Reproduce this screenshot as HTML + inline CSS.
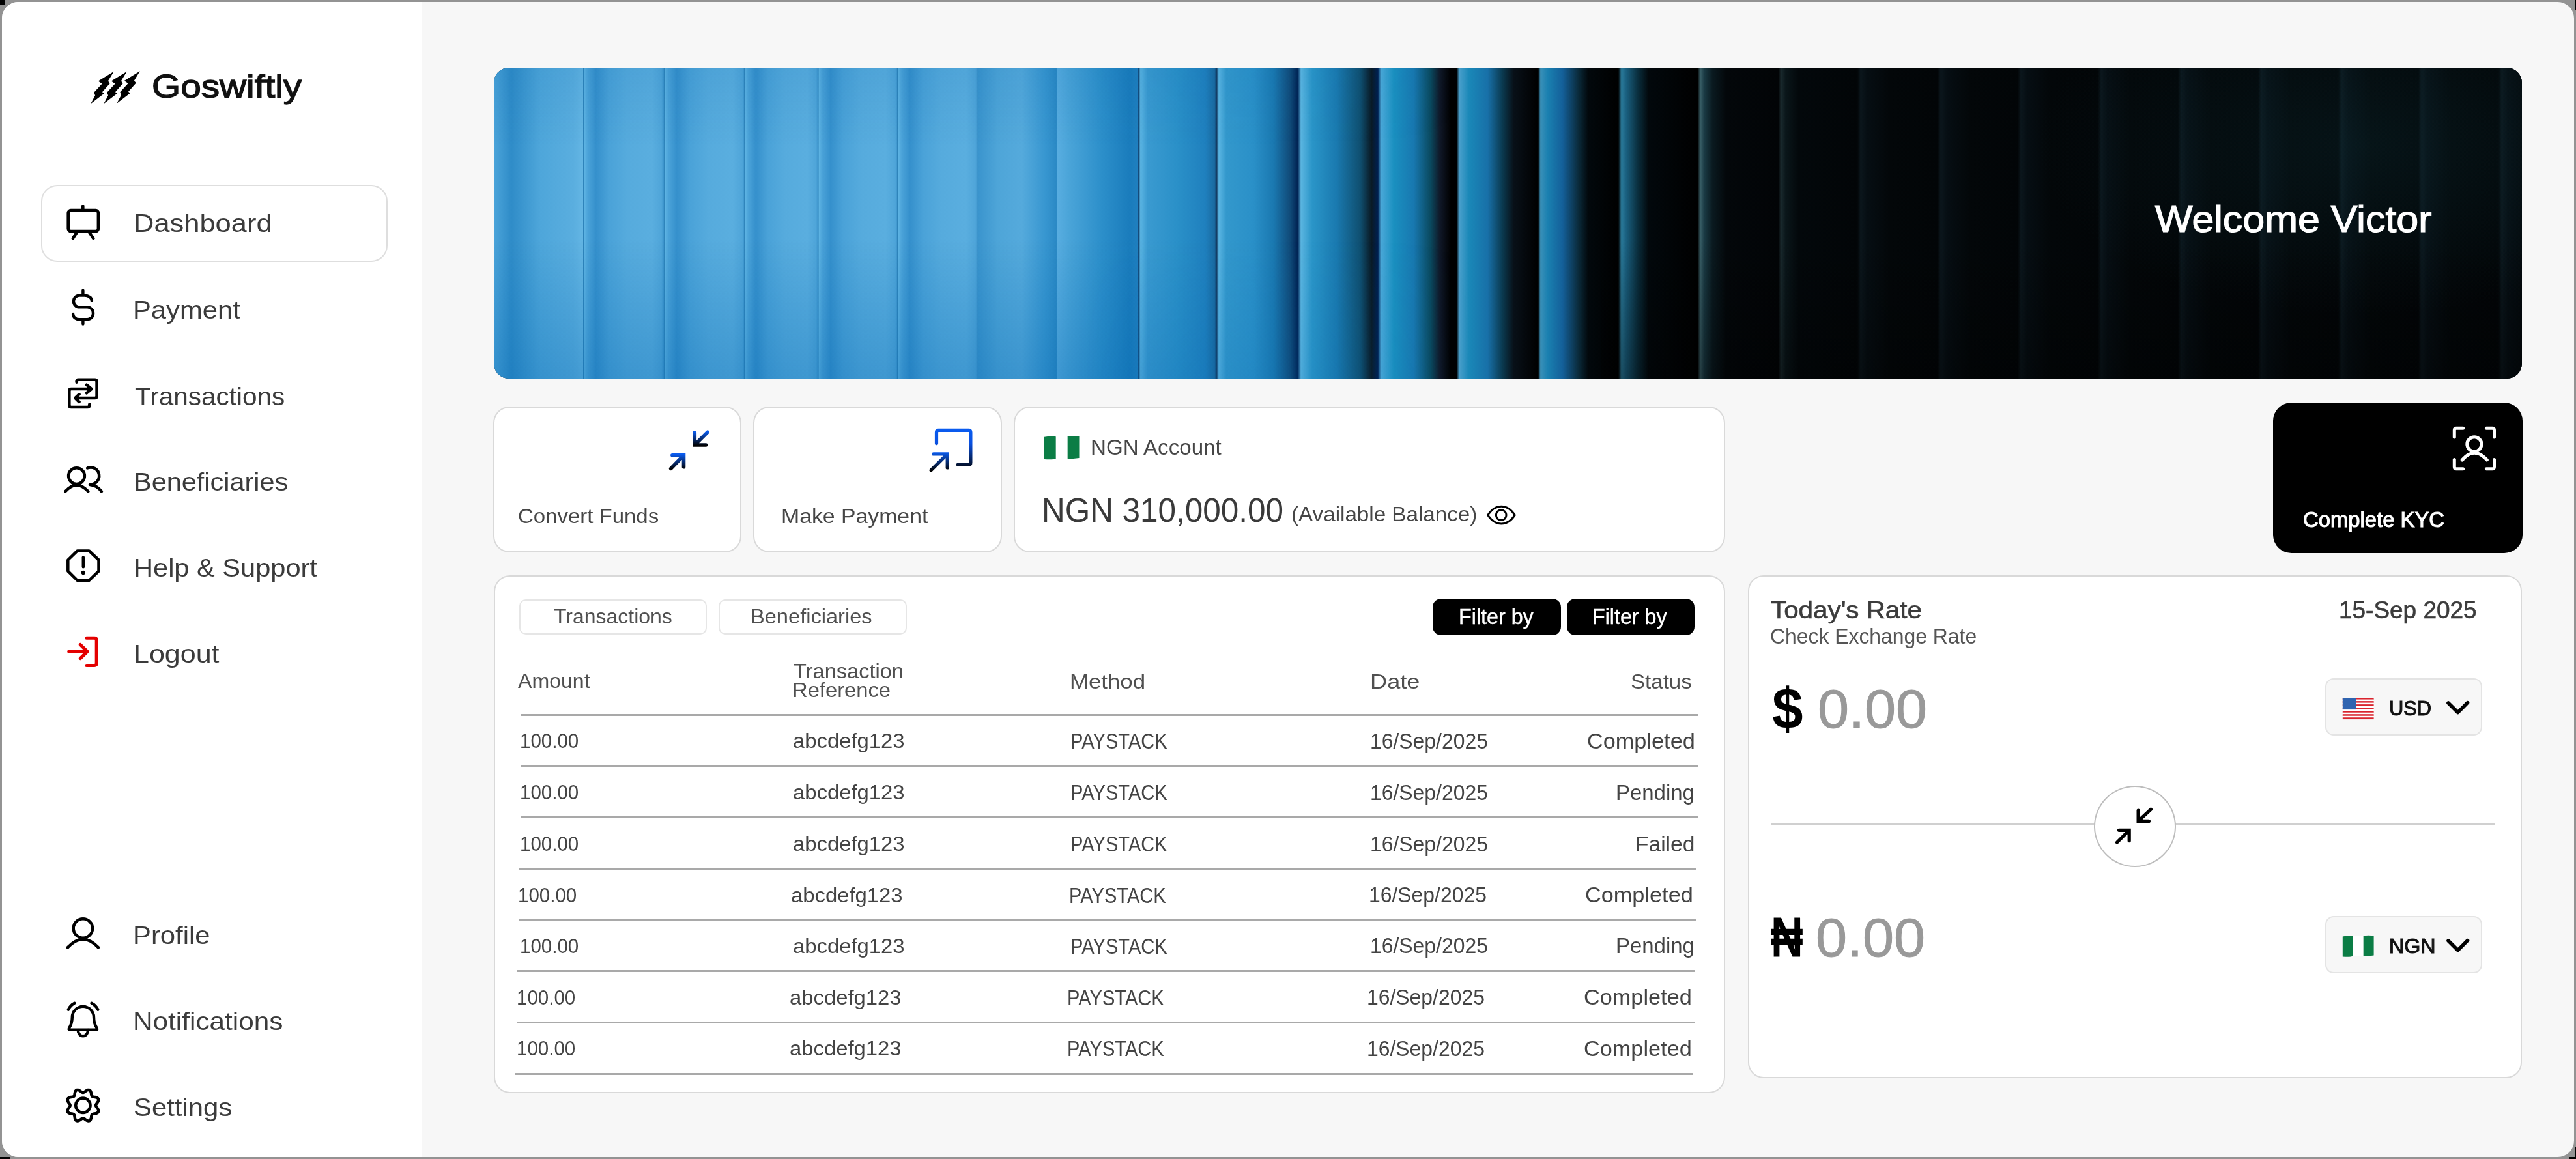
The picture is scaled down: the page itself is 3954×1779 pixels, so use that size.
<!DOCTYPE html><html><head><meta charset="utf-8"><title>Goswiftly Dashboard</title><style>
*{margin:0;padding:0;box-sizing:border-box}
html,body{width:3954px;height:1779px;overflow:hidden;background:#939393;font-family:"Liberation Sans",sans-serif}
.t{position:absolute;line-height:1;white-space:pre;transform-origin:0 0}
.abs{position:absolute}
.frame{position:absolute;left:3px;top:3px;width:3948px;height:1773px;border-radius:25px;overflow:hidden;background:#f7f7f7}
.card{position:absolute;background:#fff;border:2.5px solid #d9d9d9;border-radius:25px}
svg{position:absolute;overflow:visible}
</style></head><body>
<div class="abs" style="left:0;top:0;width:8px;height:8px;background:#000"></div>
<div class="abs" style="left:3952px;top:0;width:2px;height:16px;background:#000"></div>
<div class="abs" style="left:0;top:1776px;width:16px;height:3px;background:#000"></div>
<div class="abs" style="left:3944px;top:1776px;width:10px;height:3px;background:#000"></div>
<div class="abs" style="left:3952px;top:1760px;width:2px;height:19px;background:#000"></div>
<div class="frame"><div class="abs" style="left:-3px;top:-3px;width:3954px;height:1779px">
<div class="abs" style="left:0;top:0;width:648px;height:1779px;background:#fff"></div>
<div class="abs" style="left:63px;top:284px;width:532px;height:118px;border:2.5px solid #dedede;border-radius:25px;background:#fff"></div>
<div class="abs" style="left:758px;top:104px;width:3113px;height:477px;border-radius:23px;overflow:hidden;background:#02070b">
<div class="abs" style="left:-10.0px;top:0;width:147.1px;height:477px;background:linear-gradient(90deg,#5cb2e2 0%,#4aa3d9 8%,#2f8cc8 25%,#4ea6da 55%,#5aaedf 90%,#64b6e4 100%)"></div>
<div class="abs" style="left:136.6px;top:0;width:124.4px;height:477px;background:linear-gradient(90deg,#2378b0 0%,#5cb2e2 2%,#4aa2d8 6%,#3590cc 16%,#4aa2d8 32%,#56abdd 55%,#5aaedf 85%,#4fa5d9 97%,#3a92ca 100%)"></div>
<div class="abs" style="left:260.5px;top:0;width:124.3px;height:477px;background:linear-gradient(90deg,#2378b0 0%,#5cb2e2 2%,#4aa2d8 6%,#3590cc 16%,#4aa2d8 32%,#56abdd 55%,#5aaedf 85%,#4fa5d9 97%,#3a92ca 100%)"></div>
<div class="abs" style="left:384.3px;top:0;width:113.6px;height:477px;background:linear-gradient(90deg,#2378b0 0%,#5cb2e2 2%,#4aa2d8 6%,#3590cc 16%,#4aa2d8 32%,#56abdd 55%,#5aaedf 85%,#4fa5d9 97%,#3a92ca 100%)"></div>
<div class="abs" style="left:497.4px;top:0;width:122.2px;height:477px;background:linear-gradient(90deg,#2378b0 0%,#5cb2e2 2%,#4aa2d8 6%,#3590cc 16%,#4aa2d8 32%,#56abdd 55%,#5aaedf 85%,#4fa5d9 97%,#3a92ca 100%)"></div>
<div class="abs" style="left:619.1px;top:0;width:124.3px;height:477px;background:linear-gradient(90deg,#2378b0 0%,#5cb2e2 2%,#4aa2d8 6%,#3590cc 16%,#4aa2d8 32%,#56abdd 55%,#5aaedf 85%,#4fa5d9 97%,#3a92ca 100%)"></div>
<div class="abs" style="left:742.9px;top:0;width:122.3px;height:477px;background:linear-gradient(90deg,#3a94cd 0%,#4ea5d8 25%,#55aadc 55%,#3796d0 85%,#2a88c4 100%)"></div>
<div class="abs" style="left:864.7px;top:0;width:124.3px;height:477px;background:linear-gradient(90deg,#58ade0 0%,#4aa4d8 15%,#2c8fca 55%,#1a7cbc 90%,#2080c0 100%)"></div>
<div class="abs" style="left:988.5px;top:0;width:121.0px;height:477px;background:linear-gradient(90deg,#0a3a6a 0%,#5ab4e2 3%,#3a9ad0 12%,#2a90c8 50%,#1f80be 85%,#1a6aa0 97%,#0a2a50 100%)"></div>
<div class="abs" style="left:1109.0px;top:0;width:125.5px;height:477px;background:linear-gradient(90deg,#0a2a50 0%,#5ab5e2 3%,#3398cc 12%,#2a90c8 45%,#1a78b0 70%,#104a78 90%,#002050 100%)"></div>
<div class="abs" style="left:1234.0px;top:0;width:123.0px;height:477px;background:linear-gradient(90deg,#002050 0%,#5ab5e0 4%,#2a95c8 18%,#1a7ab0 48%,#0f4f70 78%,#0a1a25 92%,#002050 100%)"></div>
<div class="abs" style="left:1356.5px;top:0;width:122.0px;height:477px;background:linear-gradient(90deg,#002050 0%,#4aa8d8 4%,#1a90c0 20%,#1878b0 45%,#0a4a60 66%,#101828 78%,#000 92%,#000 100%)"></div>
<div class="abs" style="left:1478.0px;top:0;width:125.0px;height:477px;background:linear-gradient(90deg,#000 0%,#4aa0cc 3%,#1a88b8 15%,#1870a8 38%,#0a3a50 56%,#081018 70%,#000 100%)"></div>
<div class="abs" style="left:1602.5px;top:0;width:124.4px;height:477px;background:linear-gradient(90deg,#000 0%,#3a90b8 3%,#1a80b0 12%,#14609a 30%,#0a2a3a 50%,#02080c 62%,#000 100%)"></div>
<div class="abs" style="left:1726.4px;top:0;width:122.1px;height:477px;background:linear-gradient(90deg,#000 0%,#2a7a9a 4%,#1a6080 10%,#0a3040 24%,#02080c 38%,#000 100%)"></div>
<div class="abs" style="left:1848.0px;top:0;width:124.5px;height:477px;background:linear-gradient(90deg,#000 0%,#3a6068 3%,#1a3a44 8%,#0a1a20 18%,#03070a 35%,#020406 100%)"></div>
<div class="abs" style="left:1972.0px;top:0;width:121.5px;height:477px;background:linear-gradient(90deg,#020406 0%,#1a2a2e 3%,#0a161a 9%,#03080b 25%,#020507 100%)"></div>
<div class="abs" style="left:2093.0px;top:0;width:123.5px;height:477px;background:linear-gradient(90deg,#020507 0%,#0b161c 4%,#060e13 12%,#030709 40%,#020507 100%)"></div>
<div class="abs" style="left:2216.0px;top:0;width:123.5px;height:477px;background:linear-gradient(90deg,#020507 0%,#0b161c 4%,#060e13 12%,#030709 40%,#020507 100%)"></div>
<div class="abs" style="left:2339.0px;top:0;width:123.5px;height:477px;background:linear-gradient(90deg,#020507 0%,#0b161c 4%,#060e13 12%,#030709 40%,#020507 100%)"></div>
<div class="abs" style="left:2462.0px;top:0;width:123.5px;height:477px;background:linear-gradient(90deg,#020507 0%,#0b161c 4%,#060e13 12%,#030709 40%,#020507 100%)"></div>
<div class="abs" style="left:2585.0px;top:0;width:123.5px;height:477px;background:linear-gradient(90deg,#020507 0%,#0b161c 4%,#060e13 12%,#030709 40%,#020507 100%)"></div>
<div class="abs" style="left:2708.0px;top:0;width:123.5px;height:477px;background:linear-gradient(90deg,#020507 0%,#0b161c 4%,#060e13 12%,#030709 40%,#020507 100%)"></div>
<div class="abs" style="left:2831.0px;top:0;width:123.5px;height:477px;background:linear-gradient(90deg,#020507 0%,#0b161c 4%,#060e13 12%,#030709 40%,#020507 100%)"></div>
<div class="abs" style="left:2954.0px;top:0;width:123.5px;height:477px;background:linear-gradient(90deg,#020507 0%,#0b161c 4%,#060e13 12%,#030709 40%,#020507 100%)"></div>
<div class="abs" style="left:3077.0px;top:0;width:123.5px;height:477px;background:linear-gradient(90deg,#020507 0%,#0b161c 4%,#060e13 12%,#030709 40%,#020507 100%)"></div>
<div class="abs" style="left:0;top:0;width:1500px;height:100%;background:linear-gradient(180deg,rgba(0,90,160,0.10) 0%,rgba(0,90,160,0) 25%,rgba(0,100,170,0) 55%,rgba(0,100,175,0.30) 100%);-webkit-mask-image:linear-gradient(90deg,#000 60%,transparent 100%)"></div>
<div class="abs" style="left:2300px;top:0;width:813px;height:100%;background:radial-gradient(ellipse 500px 260px at 70% 25%,rgba(20,70,80,0.22),rgba(20,70,80,0) 100%)"></div>
<div class="abs" style="left:1700px;top:0;width:1413px;height:100%;background:linear-gradient(180deg,rgba(0,0,0,0) 55%,rgba(0,0,0,0.35) 100%)"></div>
</div>
<div class="card" style="left:757px;top:623.5px;width:381px;height:224px"></div>
<div class="card" style="left:1156px;top:623.5px;width:381.5px;height:224px"></div>
<div class="card" style="left:1556px;top:624px;width:1092px;height:223.5px"></div>
<div class="abs" style="left:3488.5px;top:618px;width:383px;height:230.5px;background:#000;border-radius:28px"></div>
<div class="card" style="left:757.5px;top:882.5px;width:1890.5px;height:795px;border-radius:25px"></div>
<div class="card" style="left:2682.5px;top:882.5px;width:1188.5px;height:772.5px;border-radius:24px"></div>
<div class="abs" style="left:797px;top:919.5px;width:288px;height:54.5px;border:2px solid #e6e6e6;border-radius:10px;background:#fff"></div>
<div class="abs" style="left:1103px;top:919.5px;width:288.5px;height:54.5px;border:2px solid #e6e6e6;border-radius:10px;background:#fff"></div>
<div class="abs" style="left:2198.5px;top:918.5px;width:197px;height:56.5px;background:#000;border-radius:13px"></div>
<div class="abs" style="left:2404.5px;top:918.5px;width:196.5px;height:56.5px;background:#000;border-radius:13px"></div>
<div class="abs" style="left:799px;top:1096.0px;width:1807.0px;height:2.5px;background:#a9a9a9"></div>
<div class="abs" style="left:799.6px;top:1174.3px;width:1806.6px;height:2.5px;background:#a9a9a9"></div>
<div class="abs" style="left:799.6px;top:1253.3px;width:1806.6px;height:2.5px;background:#a9a9a9"></div>
<div class="abs" style="left:796.5px;top:1332.3px;width:1807.2px;height:2.5px;background:#a9a9a9"></div>
<div class="abs" style="left:796.5px;top:1410.3px;width:1806.8px;height:2.5px;background:#a9a9a9"></div>
<div class="abs" style="left:794px;top:1489.3px;width:1806.8px;height:2.5px;background:#a9a9a9"></div>
<div class="abs" style="left:794px;top:1568.3px;width:1806.8px;height:2.5px;background:#a9a9a9"></div>
<div class="abs" style="left:791.3px;top:1647.3px;width:1806.7px;height:2.5px;background:#a9a9a9"></div>
<div class="abs" style="left:2718.5px;top:1263px;width:1110.5px;height:3.5px;background:#d0d0d0"></div>
<div class="abs" style="left:3214px;top:1206px;width:126px;height:124.5px;border:2.5px solid #bdbdbd;border-radius:50%;background:#fff"></div>
<div class="abs" style="left:3568.5px;top:1041px;width:241px;height:88px;border:2px solid #e4e4e4;border-radius:13px;background:#f7f7f7"></div>
<div class="abs" style="left:3568.5px;top:1406px;width:241px;height:88px;border:2px solid #e4e4e4;border-radius:13px;background:#f7f7f7"></div>
<div class="t" style="left:233.2px;top:107.9px;font-size:50.72px;color:#111;font-weight:normal;transform:scaleX(1.1188);-webkit-text-stroke:1.3px #111;">Goswiftly</div>
<div class="t" style="left:204.5px;top:323.1px;font-size:39.42px;color:#3b3b3b;font-weight:normal;transform:scaleX(1.1028);">Dashboard</div>
<div class="t" style="left:204.2px;top:456.0px;font-size:39.42px;color:#3b3b3b;font-weight:normal;transform:scaleX(1.0601);">Payment</div>
<div class="t" style="left:206.7px;top:588.5px;font-size:39.42px;color:#3b3b3b;font-weight:normal;transform:scaleX(1.0278);">Transactions</div>
<div class="t" style="left:204.9px;top:719.9px;font-size:39.42px;color:#3b3b3b;font-weight:normal;transform:scaleX(1.0513);">Beneficiaries</div>
<div class="t" style="left:204.9px;top:851.8px;font-size:39.42px;color:#3b3b3b;font-weight:normal;transform:scaleX(1.0548);">Help &amp; Support</div>
<div class="t" style="left:204.8px;top:983.8px;font-size:39.42px;color:#3b3b3b;font-weight:normal;transform:scaleX(1.0916);">Logout</div>
<div class="t" style="left:204.0px;top:1417.3px;font-size:38.41px;color:#3b3b3b;font-weight:normal;transform:scaleX(1.0895);">Profile</div>
<div class="t" style="left:203.6px;top:1549.3px;font-size:38.41px;color:#3b3b3b;font-weight:normal;transform:scaleX(1.1016);">Notifications</div>
<div class="t" style="left:204.9px;top:1681.3px;font-size:38.41px;color:#3b3b3b;font-weight:normal;transform:scaleX(1.0902);">Settings</div>
<div class="t" style="left:3308.4px;top:308.7px;font-size:56.52px;color:#fff;font-weight:normal;transform:scaleX(1.0784);-webkit-text-stroke:1.2px #fff;">Welcome Victor</div>
<div class="t" style="left:795.1px;top:777.1px;font-size:30.43px;color:#464646;font-weight:normal;transform:scaleX(1.0832);">Convert Funds</div>
<div class="t" style="left:1198.9px;top:777.1px;font-size:30.43px;color:#464646;font-weight:normal;transform:scaleX(1.1106);">Make Payment</div>
<div class="t" style="left:1674.3px;top:669.5px;font-size:33.33px;color:#464646;font-weight:normal;transform:scaleX(0.9940);">NGN Account</div>
<div class="t" style="left:1599.0px;top:756.6px;font-size:52.17px;color:#3a3a3a;font-weight:normal;transform:scaleX(0.9479);">NGN 310,000.00</div>
<div class="t" style="left:1981.5px;top:773.9px;font-size:31.88px;color:#464646;font-weight:normal;transform:scaleX(1.0411);">(Available Balance)</div>
<div class="t" style="left:3535.1px;top:782.1px;font-size:32.61px;color:#fff;font-weight:normal;transform:scaleX(1.0061);-webkit-text-stroke:1.0px #fff;">Complete KYC</div>
<div class="t" style="left:850.0px;top:931.4px;font-size:31.30px;color:#505050;font-weight:normal;transform:scaleX(1.0213);">Transactions</div>
<div class="t" style="left:1152.0px;top:931.4px;font-size:31.30px;color:#505050;font-weight:normal;transform:scaleX(1.0415);">Beneficiaries</div>
<div class="t" style="left:2239.4px;top:930.5px;font-size:32.90px;color:#fff;font-weight:normal;transform:scaleX(0.9811);-webkit-text-stroke:0.4px #fff;">Filter by</div>
<div class="t" style="left:2444.4px;top:930.5px;font-size:32.90px;color:#fff;font-weight:normal;transform:scaleX(0.9793);-webkit-text-stroke:0.4px #fff;">Filter by</div>
<div class="t" style="left:794.6px;top:1030.0px;font-size:31.16px;color:#505050;font-weight:normal;transform:scaleX(1.0300);">Amount</div>
<div class="t" style="left:1217.9px;top:1015.2px;font-size:31.16px;color:#505050;font-weight:normal;transform:scaleX(1.0452);">Transaction</div>
<div class="t" style="left:1216.0px;top:1043.5px;font-size:31.16px;color:#505050;font-weight:normal;transform:scaleX(1.0507);">Reference</div>
<div class="t" style="left:1642.2px;top:1030.7px;font-size:31.16px;color:#505050;font-weight:normal;transform:scaleX(1.1167);">Method</div>
<div class="t" style="left:2103.1px;top:1030.7px;font-size:31.16px;color:#505050;font-weight:normal;transform:scaleX(1.1612);">Date</div>
<div class="t" style="left:2503.3px;top:1030.7px;font-size:31.16px;color:#505050;font-weight:normal;transform:scaleX(1.0620);">Status</div>
<div class="t" style="left:2717.9px;top:918.4px;font-size:37.68px;color:#3c3c3c;font-weight:normal;transform:scaleX(1.0709);-webkit-text-stroke:0.6px #3c3c3c;">Today's Rate</div>
<div class="t" style="left:2717.1px;top:961.1px;font-size:32.75px;color:#555;font-weight:normal;transform:scaleX(0.9732);">Check Exchange Rate</div>
<div class="t" style="left:3589.9px;top:918.4px;font-size:37.68px;color:#3c3c3c;font-weight:normal;transform:scaleX(0.9810);-webkit-text-stroke:0.6px #3c3c3c;">15-Sep 2025</div>
<div class="t" style="left:2719.9px;top:1043.1px;font-size:89.02px;color:#000;font-weight:bold;transform:scaleX(0.9591);">$</div>
<div class="t" style="left:2789.7px;top:1046.0px;font-size:84.23px;color:#999;font-weight:normal;transform:scaleX(1.0254);-webkit-text-stroke:1.0px #999;">0.00</div>
<div class="t" style="left:3666.7px;top:1071.4px;font-size:32.17px;color:#111;font-weight:normal;transform:scaleX(0.9591);-webkit-text-stroke:1.1px #111;">USD</div>
<div class="t" style="left:2717.9px;top:1395.5px;font-size:86.57px;color:#000;font-weight:bold;transform:scaleX(0.7954);">₦</div>
<div class="t" style="left:2787.3px;top:1397.7px;font-size:83.52px;color:#999;font-weight:normal;transform:scaleX(1.0340);-webkit-text-stroke:1.0px #999;">0.00</div>
<div class="t" style="left:3667.4px;top:1437.3px;font-size:31.01px;color:#111;font-weight:normal;transform:scaleX(1.0377);-webkit-text-stroke:1.1px #111;">NGN</div>
<div class="t" style="left:797.8px;top:1122.4px;font-size:31.88px;color:#444;font-weight:normal;transform:scaleX(0.9260);">100.00</div>
<div class="t" style="left:1216.9px;top:1122.4px;font-size:31.88px;color:#444;font-weight:normal;transform:scaleX(1.0300);">abcdefg123</div>
<div class="t" style="left:1643.0px;top:1121.2px;font-size:33.33px;color:#444;font-weight:normal;transform:scaleX(0.8731);">PAYSTACK</div>
<div class="t" style="left:2103.4px;top:1121.8px;font-size:32.61px;color:#444;font-weight:normal;transform:scaleX(0.9780);">16/Sep/2025</div>
<div class="t" style="left:2435.7px;top:1121.8px;font-size:32.61px;color:#444;font-weight:normal;transform:scaleX(1.0512);">Completed</div>
<div class="t" style="left:797.8px;top:1201.4px;font-size:31.88px;color:#444;font-weight:normal;transform:scaleX(0.9260);">100.00</div>
<div class="t" style="left:1216.9px;top:1201.4px;font-size:31.88px;color:#444;font-weight:normal;transform:scaleX(1.0300);">abcdefg123</div>
<div class="t" style="left:1643.0px;top:1200.2px;font-size:33.33px;color:#444;font-weight:normal;transform:scaleX(0.8731);">PAYSTACK</div>
<div class="t" style="left:2103.4px;top:1200.8px;font-size:32.61px;color:#444;font-weight:normal;transform:scaleX(0.9780);">16/Sep/2025</div>
<div class="t" style="left:2480.3px;top:1200.8px;font-size:32.61px;color:#444;font-weight:normal;transform:scaleX(1.0103);">Pending</div>
<div class="t" style="left:797.8px;top:1280.4px;font-size:31.88px;color:#444;font-weight:normal;transform:scaleX(0.9260);">100.00</div>
<div class="t" style="left:1216.9px;top:1280.4px;font-size:31.88px;color:#444;font-weight:normal;transform:scaleX(1.0300);">abcdefg123</div>
<div class="t" style="left:1643.0px;top:1279.2px;font-size:33.33px;color:#444;font-weight:normal;transform:scaleX(0.8731);">PAYSTACK</div>
<div class="t" style="left:2103.4px;top:1279.8px;font-size:32.61px;color:#444;font-weight:normal;transform:scaleX(0.9780);">16/Sep/2025</div>
<div class="t" style="left:2510.0px;top:1279.8px;font-size:32.61px;color:#444;font-weight:normal;transform:scaleX(1.0282);">Failed</div>
<div class="t" style="left:795.3px;top:1358.9px;font-size:31.88px;color:#444;font-weight:normal;transform:scaleX(0.9260);">100.00</div>
<div class="t" style="left:1214.4px;top:1358.9px;font-size:31.88px;color:#444;font-weight:normal;transform:scaleX(1.0300);">abcdefg123</div>
<div class="t" style="left:1640.5px;top:1357.7px;font-size:33.33px;color:#444;font-weight:normal;transform:scaleX(0.8731);">PAYSTACK</div>
<div class="t" style="left:2100.9px;top:1358.3px;font-size:32.61px;color:#444;font-weight:normal;transform:scaleX(0.9780);">16/Sep/2025</div>
<div class="t" style="left:2433.2px;top:1358.3px;font-size:32.61px;color:#444;font-weight:normal;transform:scaleX(1.0512);">Completed</div>
<div class="t" style="left:797.8px;top:1436.9px;font-size:31.88px;color:#444;font-weight:normal;transform:scaleX(0.9260);">100.00</div>
<div class="t" style="left:1216.9px;top:1436.9px;font-size:31.88px;color:#444;font-weight:normal;transform:scaleX(1.0300);">abcdefg123</div>
<div class="t" style="left:1643.0px;top:1435.7px;font-size:33.33px;color:#444;font-weight:normal;transform:scaleX(0.8731);">PAYSTACK</div>
<div class="t" style="left:2103.4px;top:1436.3px;font-size:32.61px;color:#444;font-weight:normal;transform:scaleX(0.9780);">16/Sep/2025</div>
<div class="t" style="left:2480.3px;top:1436.3px;font-size:32.61px;color:#444;font-weight:normal;transform:scaleX(1.0103);">Pending</div>
<div class="t" style="left:792.8px;top:1515.9px;font-size:31.88px;color:#444;font-weight:normal;transform:scaleX(0.9260);">100.00</div>
<div class="t" style="left:1211.9px;top:1515.9px;font-size:31.88px;color:#444;font-weight:normal;transform:scaleX(1.0300);">abcdefg123</div>
<div class="t" style="left:1638.0px;top:1514.7px;font-size:33.33px;color:#444;font-weight:normal;transform:scaleX(0.8731);">PAYSTACK</div>
<div class="t" style="left:2098.4px;top:1515.3px;font-size:32.61px;color:#444;font-weight:normal;transform:scaleX(0.9780);">16/Sep/2025</div>
<div class="t" style="left:2430.7px;top:1515.3px;font-size:32.61px;color:#444;font-weight:normal;transform:scaleX(1.0512);">Completed</div>
<div class="t" style="left:792.8px;top:1594.4px;font-size:31.88px;color:#444;font-weight:normal;transform:scaleX(0.9260);">100.00</div>
<div class="t" style="left:1211.9px;top:1594.4px;font-size:31.88px;color:#444;font-weight:normal;transform:scaleX(1.0300);">abcdefg123</div>
<div class="t" style="left:1638.0px;top:1593.2px;font-size:33.33px;color:#444;font-weight:normal;transform:scaleX(0.8731);">PAYSTACK</div>
<div class="t" style="left:2098.4px;top:1593.8px;font-size:32.61px;color:#444;font-weight:normal;transform:scaleX(0.9780);">16/Sep/2025</div>
<div class="t" style="left:2430.7px;top:1593.8px;font-size:32.61px;color:#444;font-weight:normal;transform:scaleX(1.0512);">Completed</div>
<svg style="left:0;top:0" width="3954" height="1779" viewBox="0 0 3954 1779">
<defs>
<linearGradient id="gA" gradientUnits="userSpaceOnUse" x1="0" y1="12" x2="0" y2="34"><stop offset="0" stop-color="#0a5cf0"/><stop offset="1" stop-color="#000"/></linearGradient>
<linearGradient id="gB" gradientUnits="userSpaceOnUse" x1="0" y1="47" x2="0" y2="70"><stop offset="0" stop-color="#0a5cf0"/><stop offset="1" stop-color="#000"/></linearGradient>
<linearGradient id="gC" gradientUnits="userSpaceOnUse" x1="0" y1="10" x2="0" y2="75"><stop offset="0" stop-color="#0a5cf0"/><stop offset="0.35" stop-color="#0a50e0"/><stop offset="1" stop-color="#000"/></linearGradient>
<linearGradient id="gD" gradientUnits="userSpaceOnUse" x1="0" y1="46" x2="0" y2="75"><stop offset="0" stop-color="#0a5cf0"/><stop offset="1" stop-color="#000"/></linearGradient>
</defs>
<g transform="translate(130,100)"><g fill="#000"><polygon points="44.8,9.8 35.8,24.6 38.9,27.8 27,41.3 29.8,43.6 9.3,59.3 16,46.5 14.4,41.8 26.6,28.6 20.8,24.6"/><g transform="translate(20,0)"><polygon points="44.8,9.8 35.8,24.6 38.9,27.8 27,41.3 29.8,43.6 9.3,59.3 16,46.5 14.4,41.8 26.6,28.6 20.8,24.6"/></g><g transform="translate(40,-0.5)"><polygon points="44.8,9.8 35.8,24.6 38.9,27.8 27,41.3 29.8,43.6 9.3,59.3 16,46.5 14.4,41.8 26.6,28.6 20.8,24.6"/></g></g></g>
<g transform="translate(95,305)"><g fill="none" stroke="#000" stroke-linecap="round" stroke-linejoin="round" stroke-width="4.6"><rect x="9.7" y="18.1" width="46.2" height="32" rx="4"/><path d="M32.3,11.2V18M23.2,51.3L16.9,61M41.7,51.3L48.3,61"/></g></g>
<g transform="translate(92,436)"><path fill="none" stroke="#000" stroke-linecap="round" stroke-linejoin="round" stroke-width="4.4" d="M48.9,25.9C48.9,21 44,17.6 38,17.6H30C25,17.6 21,21.5 21,26.5C21,31.5 25,35.4 30,35.4H42C47,35.4 51.1,39.5 51.1,44.8C51.1,50 47,54.3 42,54.3H30C24,54.3 20.1,50.5 20.1,46M35.4,9.6V17.6M35.4,54.3V61.6"/></g>
<g transform="translate(95,570)"><path fill="none" stroke="#000" stroke-linecap="round" stroke-linejoin="round" stroke-width="4.6" d="M22.6,16.6V15.8Q22.6,12.8 25.6,12.8H50.6Q53.6,12.8 53.6,15.8V38Q53.6,41 50.6,41H20.5M26.6,35.2L20.5,41L26.6,47M42.3,50.7V52Q42.3,55 39.3,55H14.3Q11.3,55 11.3,52V30Q11.3,27 14.3,27H45.5M38,20.8L45.5,27L38,33.2"/></g>
<g transform="translate(92,700)"><g fill="none" stroke="#000" stroke-linecap="round" stroke-linejoin="round" stroke-width="4.5"><circle cx="25.5" cy="30.6" r="12.4"/><path d="M8.3,54.3Q25.5,35.1 43.4,54.3M42.1,18.5A13,13 0 1 1 46,43.4M46,44Q57,45 63.9,54.3"/></g></g>
<g transform="translate(92,832)"><g fill="none" stroke="#000" stroke-linecap="round" stroke-linejoin="round" stroke-width="4.5"><polygon points="26.8,13.4 44.7,13.4 59.5,27.5 59.5,44.7 44.7,59 26.8,59 12.3,44.7 12.3,27.5"/><path d="M35.8,23.6V38.3"/></g><circle cx="35.8" cy="46.9" r="3.1" fill="#000"/></g>
<g transform="translate(92,964)"><path fill="none" stroke="#e40000" stroke-width="5" stroke-linecap="round" stroke-linejoin="round" d="M40.9,15.3H53Q56.2,15.3 56.2,18.5V54.3Q56.2,57.5 53,57.5H40.9M13.7,36.1H41M31.3,25.5L42.1,36.1L31.3,46.6"/></g>
<g transform="translate(92,1396)"><g fill="none" stroke="#000" stroke-linecap="round" stroke-linejoin="round" stroke-width="4.5"><circle cx="35.4" cy="29" r="14.7"/><path d="M11.8,58.4Q35.4,33 59,58.4"/></g></g>
<g transform="translate(92,1528)"><g fill="none" stroke="#000" stroke-linecap="round" stroke-linejoin="round" stroke-width="4.4"><path d="M35.4,52.7H15.5Q13,52.7 14,50.3Q18.8,43 18.8,33.5A16.6,16.6 0 0 1 52,33.5Q52,43 56.8,50.3Q57.8,52.7 55.3,52.7Z"/><path d="M27.7,52.9A7.7,9.4 0 0 0 43.1,52.9M12.8,21.7Q16,15 22.3,11.8M48.5,11.8Q55,15 58.4,21.7"/></g></g>
<g transform="translate(92,1660)"><g fill="none" stroke="#000" stroke-linecap="round" stroke-linejoin="round" stroke-width="4.5"><polygon points="35.40,17.00 35.92,16.94 36.44,16.78 36.99,16.51 37.56,16.15 38.16,15.73 38.80,15.26 39.46,14.78 40.16,14.30 40.89,13.85 41.62,13.47 42.37,13.17 43.11,12.97 43.83,12.90 44.52,12.95 45.16,13.14 45.75,13.46 46.27,13.91 46.73,14.47 47.11,15.13 47.42,15.87 47.68,16.67 47.87,17.49 48.03,18.32 48.16,19.14 48.28,19.92 48.40,20.64 48.55,21.30 48.75,21.87 49.00,22.36 49.33,22.77 49.74,23.10 50.23,23.35 50.80,23.55 51.46,23.70 52.18,23.82 52.96,23.94 53.78,24.07 54.61,24.23 55.43,24.42 56.23,24.67 56.97,24.99 57.63,25.37 58.19,25.83 58.64,26.35 58.96,26.94 59.15,27.58 59.20,28.27 59.13,28.99 58.93,29.73 58.63,30.48 58.25,31.21 57.80,31.94 57.32,32.64 56.84,33.30 56.37,33.94 55.95,34.54 55.59,35.11 55.32,35.66 55.16,36.18 55.10,36.70 55.16,37.22 55.32,37.74 55.59,38.29 55.95,38.86 56.37,39.46 56.84,40.10 57.32,40.76 57.80,41.46 58.25,42.19 58.63,42.92 58.93,43.67 59.13,44.41 59.20,45.13 59.15,45.82 58.96,46.46 58.64,47.05 58.19,47.57 57.63,48.03 56.97,48.41 56.23,48.73 55.43,48.98 54.61,49.17 53.78,49.33 52.96,49.46 52.18,49.58 51.46,49.70 50.80,49.85 50.23,50.05 49.74,50.30 49.33,50.63 49.00,51.04 48.75,51.53 48.55,52.10 48.40,52.76 48.28,53.48 48.16,54.26 48.03,55.08 47.87,55.91 47.68,56.73 47.42,57.53 47.11,58.27 46.73,58.93 46.27,59.49 45.75,59.94 45.16,60.26 44.52,60.45 43.83,60.50 43.11,60.43 42.37,60.23 41.62,59.93 40.89,59.55 40.16,59.10 39.46,58.62 38.80,58.14 38.16,57.67 37.56,57.25 36.99,56.89 36.44,56.62 35.92,56.46 35.40,56.40 34.88,56.46 34.36,56.62 33.81,56.89 33.24,57.25 32.64,57.67 32.00,58.14 31.34,58.62 30.64,59.10 29.91,59.55 29.18,59.93 28.43,60.23 27.69,60.43 26.97,60.50 26.28,60.45 25.64,60.26 25.05,59.94 24.53,59.49 24.07,58.93 23.69,58.27 23.38,57.53 23.12,56.73 22.93,55.91 22.77,55.08 22.64,54.26 22.52,53.48 22.40,52.76 22.25,52.10 22.05,51.53 21.80,51.04 21.47,50.63 21.06,50.30 20.57,50.05 20.00,49.85 19.34,49.70 18.62,49.58 17.84,49.46 17.02,49.33 16.19,49.17 15.37,48.98 14.57,48.73 13.83,48.41 13.17,48.03 12.61,47.57 12.16,47.05 11.84,46.46 11.65,45.82 11.60,45.13 11.67,44.41 11.87,43.67 12.17,42.92 12.55,42.19 13.00,41.46 13.48,40.76 13.96,40.10 14.43,39.46 14.85,38.86 15.21,38.29 15.48,37.74 15.64,37.22 15.70,36.70 15.64,36.18 15.48,35.66 15.21,35.11 14.85,34.54 14.43,33.94 13.96,33.30 13.48,32.64 13.00,31.94 12.55,31.21 12.17,30.48 11.87,29.73 11.67,28.99 11.60,28.27 11.65,27.58 11.84,26.94 12.16,26.35 12.61,25.83 13.17,25.37 13.83,24.99 14.57,24.68 15.37,24.42 16.19,24.23 17.02,24.07 17.84,23.94 18.62,23.82 19.34,23.70 20.00,23.55 20.57,23.35 21.06,23.10 21.47,22.77 21.80,22.36 22.05,21.87 22.25,21.30 22.40,20.64 22.52,19.92 22.64,19.14 22.77,18.32 22.93,17.49 23.12,16.67 23.38,15.87 23.69,15.13 24.07,14.47 24.53,13.91 25.05,13.46 25.64,13.14 26.28,12.95 26.97,12.90 27.69,12.97 28.43,13.17 29.18,13.47 29.91,13.85 30.64,14.30 31.34,14.78 32.00,15.26 32.64,15.73 33.24,16.15 33.81,16.51 34.36,16.78 34.88,16.94"/><circle cx="35.4" cy="36.7" r="11.2"/></g></g>
<g transform="translate(1015,650)"><g fill="none" stroke-width="5.6" stroke-linecap="round" stroke-linejoin="miter"><path stroke="url(#gA)" d="M71.1,13.2L52,32.3M51.3,13.9V33H68.6"/><path stroke="url(#gB)" d="M14.7,69.3L33.8,49.5M16.9,48.8H34.5V66.7"/></g></g>
<g transform="translate(1415,648)"><g fill="none" stroke="url(#gC)" stroke-width="5.2" stroke-linecap="round" stroke-linejoin="round"><path d="M22.5,32.6V15.4Q22.5,12.4 25.5,12.4H71.9Q74.9,12.4 74.9,15.4V62.2Q74.9,65.2 71.9,65.2H55.5"/></g><g fill="none" stroke="url(#gD)" stroke-width="5.2" stroke-linecap="round" stroke-linejoin="miter"><path d="M14,73.8L38.5,49.6M17.9,48.9H39.2V69.9"/></g></g>
<g transform="translate(2270,760)"><g fill="none" stroke="#000" stroke-linecap="round" stroke-linejoin="round" stroke-width="3"><path d="M13.7,30.6C20,21 27,17.2 34.45,17.2C42,17.2 49,21 55.2,30.6C49,40.2 42,44 34.45,44C27,44 20,40.2 13.7,30.6Z"/><circle cx="34.2" cy="30.6" r="7.9"/></g></g>
<g transform="translate(3750,640)"><g fill="none" stroke="#fff" stroke-width="5" stroke-linecap="round" stroke-linejoin="round"><path d="M17.3,31V20.3Q17.3,17.3 20.3,17.3H30.6M66.4,17.3H75.5Q78.5,17.3 78.5,20.3V31M17.3,65.6V76.8Q17.3,79.8 20.3,79.8H30.6M66.4,79.8H75.5Q78.5,79.8 78.5,76.8V65.6"/><circle cx="47.9" cy="41.8" r="11.1"/><path d="M29.3,66Q47.9,44.4 67.3,66"/></g></g>
<g transform="translate(1603,668.7)"><path d="M0,2Q13.375,0 17.833333333333332,1.5V35.3Q13.375,37.3 0,36.3Z" fill="#0b7d45"/><rect x="17.833333333333332" y="1" width="17.833333333333332" height="34.8" fill="#fff"/><path d="M35.666666666666664,1Q44.405,-0.5 53.5,1V34.3Q44.405,35.3 35.666666666666664,35.8Z" fill="#0b7d45"/></g>
<g transform="translate(3595.8,1435.5)"><path d="M0,2Q11.95,0 15.933333333333332,1.5V32Q11.95,34 0,33Z" fill="#0b7d45"/><rect x="15.933333333333332" y="1" width="15.933333333333332" height="31.5" fill="#fff"/><path d="M31.866666666666664,1Q39.67399999999999,-0.5 47.8,1V31Q39.67399999999999,32 31.866666666666664,32.5Z" fill="#0b7d45"/></g>
<g transform="translate(3595.8,1069.6)"><rect x="0" y="1.50" width="47.8" height="2.81" fill="#d9252e"/><rect x="0" y="4.01" width="47.8" height="2.81" fill="#ffffff"/><rect x="0" y="6.52" width="47.8" height="2.81" fill="#d9252e"/><rect x="0" y="9.04" width="47.8" height="2.81" fill="#ffffff"/><rect x="0" y="11.55" width="47.8" height="2.81" fill="#d9252e"/><rect x="0" y="14.06" width="47.8" height="2.81" fill="#ffffff"/><rect x="0" y="16.57" width="47.8" height="2.81" fill="#d9252e"/><rect x="0" y="19.09" width="47.8" height="2.81" fill="#ffffff"/><rect x="0" y="21.60" width="47.8" height="2.81" fill="#d9252e"/><rect x="0" y="24.11" width="47.8" height="2.81" fill="#ffffff"/><rect x="0" y="26.62" width="47.8" height="2.81" fill="#d9252e"/><rect x="0" y="29.14" width="47.8" height="2.81" fill="#ffffff"/><rect x="0" y="31.65" width="47.8" height="2.81" fill="#d9252e"/><rect x="0" y="1.5" width="21" height="18" fill="#2f64b0"/></g>
<path fill="none" stroke="#000" stroke-width="5.6" stroke-linecap="round" stroke-linejoin="round" d="M3758,1079L3772.6,1093.6L3787.5,1078.6M3758,1444L3772.6,1458.6L3787.5,1443.6"/>
<path fill="none" stroke="#000" stroke-width="5.2" stroke-linecap="round" stroke-linejoin="miter" d="M3301.4,1242.3L3282.8,1259.7M3282.1,1244.1V1260.4H3298.4M3249.5,1293L3267.5,1275M3252.5,1274.3H3268.2V1290.6"/>
</svg>
</div></div></body></html>
